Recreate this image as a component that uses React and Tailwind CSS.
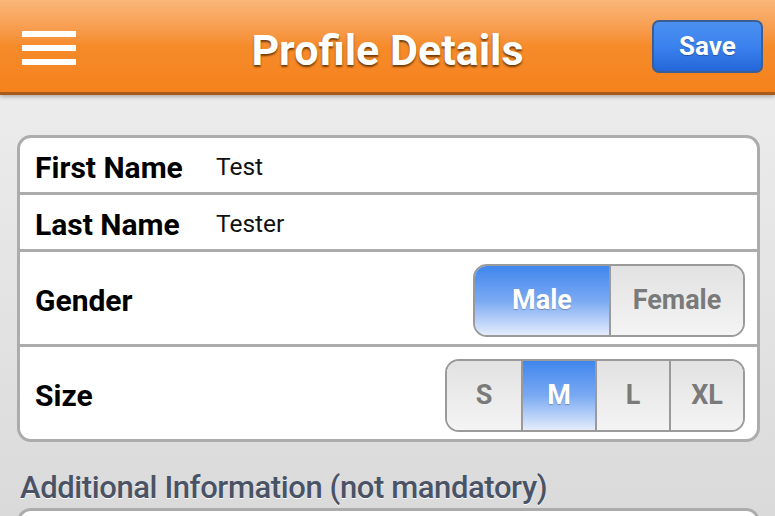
import React, { useState } from "react";

const Segmented = ({ options, value, onChange, widthClass }) => {
  return (
    <div className="flex h-[73px] rounded-[14px] border-2 border-[#9a9a9a] overflow-hidden">
      {options.map((opt, i) => {
        const active = opt === value;
        return (
          <button
            key={opt}
            onClick={() => onChange(opt)}
            className={`${widthClass} flex items-center justify-center text-[27px] font-bold ${
              i > 0 ? "border-l-2 border-[#9a9a9a]" : ""
            } ${
              active
                ? "bg-gradient-to-b from-[#3f86ee] via-[#7aa9f2] to-[#e4ecfb] text-white [text-shadow:0_1px_1px_rgba(0,0,0,0.25)]"
                : "bg-gradient-to-b from-[#e2e2e2] to-[#f4f4f4] text-[#7a7a7a]"
            }`}
          >
            {opt}
          </button>
        );
      })}
    </div>
  );
};

const App = () => {
  const [gender, setGender] = useState("Male");
  const [size, setSize] = useState("M");

  return (
    <div className="h-[516px] overflow-hidden bg-gradient-to-b from-[#f0f0f0] to-[#dadada] font-['Roboto',sans-serif]">
      {/* Header */}
      <div className="relative h-[95px] flex items-center justify-between px-[22px] bg-gradient-to-b from-[#f9b779] via-[#f68b2a] to-[#f5821c] border-b-[3px] border-[#a65a1c] shadow-[0_2px_4px_rgba(0,0,0,0.25)]">
        <div className="flex flex-col gap-[8px] w-[54px] mt-[3px]">
          <div className="h-[6px] bg-white"></div>
          <div className="h-[6px] bg-white"></div>
          <div className="h-[6px] bg-white"></div>
        </div>
        <h1 className="absolute left-0 right-0 top-[24px] text-center text-[43px] leading-[52px] font-bold text-white [text-shadow:0_2px_2px_rgba(80,40,0,0.8)] pointer-events-none">
          Profile Details
        </h1>
        <button className="mr-[-10px] w-[111px] h-[53px] rounded-[7px] border-2 border-[#3a5f95] bg-gradient-to-b from-[#4b8ff0] via-[#3b82ee] to-[#2466d8] text-white text-[26px] font-bold [text-shadow:0_1px_1px_rgba(0,0,0,0.3)]">
          Save
        </button>
      </div>

      {/* Main card */}
      <div className="mt-[40px] ml-[17px] mr-[15px] bg-white rounded-[14px] border-[3px] border-[#acacac]">
        <div className="h-[57px] flex items-center pt-[5px] px-[15px] border-b-[3px] border-[#acacac]">
          <span className="w-[181px] text-[30px] font-bold text-black">First Name</span>
          <span className="text-[24.5px] text-[#111]">Test</span>
        </div>
        <div className="h-[57px] flex items-center pt-[5px] px-[15px] border-b-[3px] border-[#acacac]">
          <span className="w-[181px] text-[30px] font-bold text-black">Last Name</span>
          <span className="text-[24.5px] text-[#111]">Tester</span>
        </div>
        <div className="h-[95px] flex items-center justify-between pt-[5px] pl-[15px] pr-[12px] border-b-[3px] border-[#acacac]">
          <span className="text-[30px] font-bold text-black">Gender</span>
          <Segmented
            options={["Male", "Female"]}
            value={gender}
            onChange={setGender}
            widthClass="w-[134px]"
          />
        </div>
        <div className="h-[92px] flex items-center justify-between pt-[5px] pl-[15px] pr-[12px]">
          <span className="text-[30px] font-bold text-black">Size</span>
          <Segmented
            options={["S", "M", "L", "XL"]}
            value={size}
            onChange={setSize}
            widthClass="w-[74px]"
          />
        </div>
      </div>

      {/* Additional info */}
      <h2 className="mt-[26px] ml-[20px] text-[31px] leading-[40px] font-medium tracking-[-0.4px] text-[#4a5366] [text-shadow:0_1px_0_rgba(255,255,255,0.9)]">
        Additional Information (not mandatory)
      </h2>
      <div className="mt-[0px] ml-[17px] mr-[15px] h-[60px] bg-white rounded-[14px] border-[3px] border-[#acacac]"></div>
    </div>
  );
};

export default App;
